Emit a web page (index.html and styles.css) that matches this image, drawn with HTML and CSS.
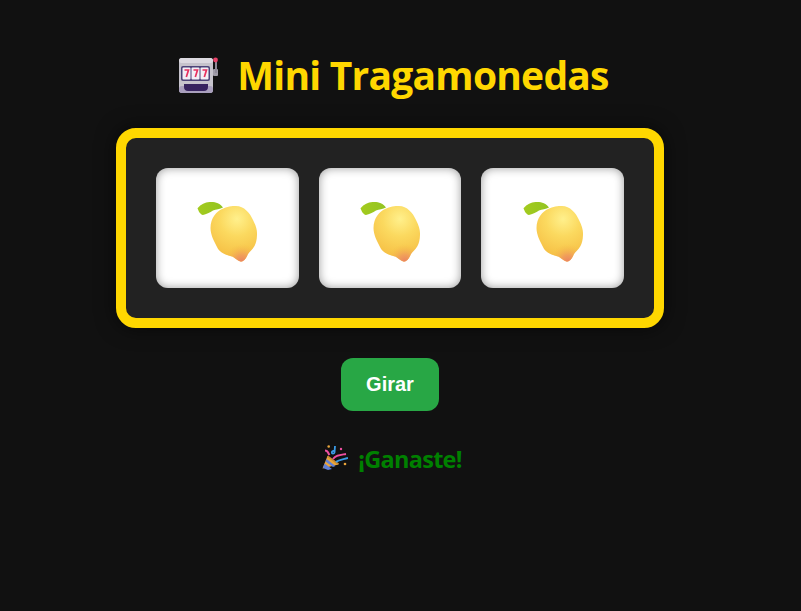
FILE: index.html
```html
<!DOCTYPE html>
<html lang="es">

<head>
  <meta charset="UTF-8">
  <meta name="viewport" content="width=device-width, initial-scale=1.0">
  <title>Mini Tragamonedas</title>
  <link rel="stylesheet" href="styles.css">
</head>

<body>
  <svg class="defs" aria-hidden="true">
    <defs>
      <radialGradient id="lemonBody" gradientUnits="userSpaceOnUse" cx="45" cy="26" r="38">
        <stop offset="0" stop-color="#fff08c" />
        <stop offset="0.45" stop-color="#fbd95f" />
        <stop offset="1" stop-color="#f6c045" />
      </radialGradient>
      <radialGradient id="lemonTip" gradientUnits="userSpaceOnUse" cx="50" cy="69" r="18">
        <stop offset="0" stop-color="#ea8062" />
        <stop offset="0.4" stop-color="#f09a5c" stop-opacity="0.85" />
        <stop offset="1" stop-color="#f6c045" stop-opacity="0" />
      </radialGradient>
      <linearGradient id="leaf" x1="0" y1="0" x2="1" y2="0">
        <stop offset="0" stop-color="#a3cb1e" />
        <stop offset="1" stop-color="#93c422" />
      </linearGradient>
      <symbol id="lemon" viewBox="0 0 70 70">
        <path fill="url(#leaf)" d="M5.500 15.300C9 11 13 9.300 17.500 9C22 8.500 28 9.500 31 14.500C28 16 24 16.500 21 17.500C18 19.500 14 21.500 11 22C8 21.500 6.500 18 5.500 15.300Z" />
        <path fill="url(#lemonBody)" d="M44 13C52 13 58 20 61 27C64 33 65.300 37 65 42C64.800 47 64 50 62.500 53C60.500 56.500 57.500 58.500 56 61C54.500 64 53.500 67 50.500 68.300C47.500 69.500 44 65.500 40.800 63.700C33 62 27 59 25 54C22 48 18.500 42 18.500 35C18.500 25 25 18 30 16C35 13.500 40 13 44 13Z" />
        <path fill="url(#lemonTip)" d="M44 13C52 13 58 20 61 27C64 33 65.300 37 65 42C64.800 47 64 50 62.500 53C60.500 56.500 57.500 58.500 56 61C54.500 64 53.500 67 50.500 68.300C47.500 69.500 44 65.500 40.800 63.700C33 62 27 59 25 54C22 48 18.500 42 18.500 35C18.500 25 25 18 30 16C35 13.500 40 13 44 13Z" />
      </symbol>
    </defs>
  </svg>

  <main class="game">
    <h1 class="title">
      <svg class="title__icon" viewBox="0 0 56 40" aria-hidden="true">
        <rect x="42" y="15" width="5" height="7" rx="1" fill="#a09ca8" />
        <rect x="44" y="7" width="2" height="12" fill="#8f8a99" />
        <circle cx="44.500" cy="6" r="2.400" fill="#e8436a" />
        <rect x="8" y="4" width="34" height="35" rx="3" fill="#c6c3cc" />
        <rect x="8" y="4" width="34" height="5" rx="2.500" fill="#dcd9e0" />
        <rect x="8" y="32" width="34" height="7" rx="3" fill="#a99fbd" />
        <rect x="10" y="12" width="29" height="15" rx="2" fill="#4d4478" />
        <rect x="11.500" y="13.500" width="8" height="12" rx="1" fill="#f3eef6" />
        <rect x="20.500" y="13.500" width="8" height="12" rx="1" fill="#f3eef6" />
        <rect x="29.500" y="13.500" width="8" height="12" rx="1" fill="#f3eef6" />
        <path d="M13.500 16h4l-2.200 7M22.500 16h4l-2.200 7M31.500 16h4l-2.200 7" fill="none" stroke="#e8315f" stroke-width="1.700" />
        <path d="M13 30h24v3c0 2.500-1.500 4-4 4H17c-2.500 0-4-1.500-4-4Z" fill="#37235f" />
      </svg>
      <span>Mini Tragamonedas</span>
    </h1>

    <section class="machine">
      <div class="slot"><svg class="slot__fruit"><use href="#lemon" /></svg></div>
      <div class="slot"><svg class="slot__fruit"><use href="#lemon" /></svg></div>
      <div class="slot"><svg class="slot__fruit"><use href="#lemon" /></svg></div>
    </section>

    <button class="spin" type="button">Girar</button>

    <p class="result">
      <svg class="result__icon" viewBox="0 0 30 30" aria-hidden="true">
        <path d="M4.500 24.500L9.500 12L20.500 20.500Z" fill="#eba63a" />
        <path d="M6.500 19.500L14 25L10 26L5 24ZM8.500 15L17.500 22L15 23L7.500 17.500Z" fill="#5f7fd6" />
        <path d="M10 11.500L21 19.500L20 21L9 13Z" fill="#c98a32" />
        <path d="M7 6.500C10 6.500 10 9 11.500 11" fill="none" stroke="#ee4fa0" stroke-width="2" />
        <path d="M17 2L16.500 8.500C16 10 13.800 10 13.800 8.500C13.800 7 15.500 6.500 16.500 7.500" fill="none" stroke="#3a9be8" stroke-width="1.800" />
        <path d="M15 15C18 11 22 11 28 10" fill="none" stroke="#ee4fa0" stroke-width="2" />
        <path d="M18 18C21 15.500 25 15.500 30 14" fill="none" stroke="#3a9be8" stroke-width="2" />
        <circle cx="10.700" cy="2.500" r="1.300" fill="#e9a53c" />
        <circle cx="23" cy="5" r="1.200" fill="#ee4fa0" />
        <circle cx="27" cy="20" r="1.300" fill="#e9a53c" />
      </svg>
      <span>¡Ganaste!</span>
    </p>
  </main>
</body>

</html>
```

FILE: styles.css
```css
* {
  padding: 0;
  margin: 0;
  box-sizing: border-box;
}

body {
  min-height: 100vh;
  font-family: "Open Sans", "Noto Sans", sans-serif;
  background-color: #111;
  overflow: hidden;
}

.defs {
  position: absolute;
  width: 0;
  height: 0;
}

.game {
  width: 780px;
  display: flex;
  flex-direction: column;
  align-items: center;
  padding-top: 47px;
}

.title {
  display: flex;
  align-items: center;
  gap: 10px;
  height: 54px;
  font-size: 39px;
  font-weight: 700;
  letter-spacing: -0.77px;
  color: gold;
}

.title__icon {
  width: 56px;
  height: 40px;
}

.machine {
  width: 548px;
  height: 200px;
  margin-top: 27px;
  display: flex;
  gap: 20px;
  padding: 30px;
  border: 10px solid gold;
  border-radius: 20px;
  background-color: #222;
  box-shadow: 0 0 20px rgba(0, 0, 0, 0.6);
}

.slot {
  flex: 1;
  display: flex;
  align-items: center;
  justify-content: center;
  background-color: #fff;
  border-radius: 12px;
  box-shadow: inset 0 0 10px rgba(0, 0, 0, 0.4);
}

.slot__fruit {
  width: 70px;
  height: 70px;
}

.spin {
  width: 98px;
  height: 53px;
  margin-top: 30px;
  font-family: "Liberation Sans", Arial, sans-serif;
  font-size: 20px;
  font-weight: 700;
  color: #fff;
  background-color: #28a745;
  border: none;
  border-radius: 12px;
}

.result {
  display: flex;
  align-items: center;
  gap: 10px;
  margin-top: 32px;
  font-size: 23.5px;
  font-weight: 700;
  letter-spacing: -0.73px;
  color: green;
}

.result__icon {
  width: 30px;
  height: 30px;
}
```
